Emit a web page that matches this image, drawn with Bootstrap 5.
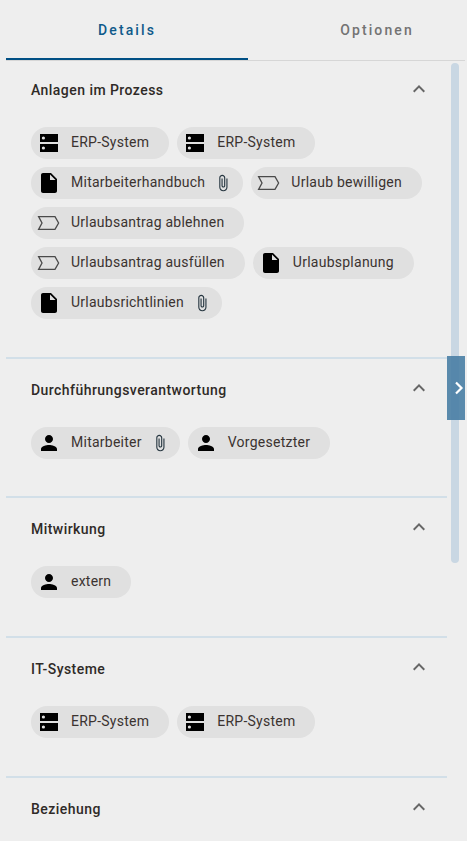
<!DOCTYPE html>
<html lang="de">
<head>
<meta charset="utf-8">
<title>Details</title>
<link href="https://cdn.jsdelivr.net/npm/bootstrap@5.3.0/dist/css/bootstrap.min.css" rel="stylesheet">
<style>
html,body{height:100%;overflow:hidden}
body{background:#eee;font-family:Roboto,"Liberation Sans",sans-serif;color:#2a2320}
.shell{position:relative;width:465px;height:841px;background:#eee;overflow:hidden}
.tabbar{height:61px;margin-left:6px;border-bottom:1px solid #d6d6d6;overflow:hidden}
.tabitem{flex:none;width:242px;height:60px;line-height:60px;text-align:center;font-size:14px;font-weight:500;letter-spacing:2.1px;color:#737373;text-decoration:none}
.tabitem.other{width:258px}
.tabitem.on{color:#0f5a8a;border-bottom:2px solid #004f84}
.panes{width:441px;margin-left:6px}
.sect{border-bottom:2px solid #d2dfe8;padding:0 16px 0 25px}
.sect:last-child{border-bottom:0}
.shead{height:60px;font-size:14px;font-weight:500;letter-spacing:.45px;color:#2f2a27}
.shead span{padding-top:2px}
.shead svg{width:24px;height:24px;flex:none;margin-bottom:2px}
.s1 .shead{height:58px}
.s1 .shead span{padding-top:0}
.sbody{padding:8px 0 38px;gap:8px}
.s2 .sbody{padding-bottom:37px}
.chip{height:32px;border-radius:16px;background:#e0e0e0;font-size:14px;letter-spacing:.25px;color:#3b3330;padding:0 20px 1px 6px;white-space:nowrap}
.chip .lead-ic{width:24px;height:24px;flex:none;margin:1px 10px 0 0}
.clip{width:18px;height:18px;flex:none;margin:1px -9px 0 9px}
.slider{position:absolute;left:451px;top:63px;width:8px;height:500px;border-radius:4px;background:#c9d7e3}
.handle{position:absolute;left:447px;top:356px;width:24px;height:64px;background:rgba(70,124,163,.88)}
</style>
</head>
<body>
<svg width="0" height="0" class="d-block position-absolute">
<defs>
<symbol id="i-srv" viewBox="0 0 24 24"><path fill="#000" d="M3 3h18v8H3zM3 13h18v8H3z"/><circle cx="6.4" cy="7" r="1.6" fill="#e0e0e0"/><circle cx="6.4" cy="17" r="1.6" fill="#e0e0e0"/></symbol>
<symbol id="i-doc" viewBox="0 0 24 24"><path fill="#000" d="M14 2H6c-1.1 0-2 .9-2 2v16c0 1.1.9 2 2 2h12c1.1 0 2-.9 2-2V8l-6-6zm-1 7V3.5L18.5 9H13z"/></symbol>
<symbol id="i-usr" viewBox="0 0 24 24"><path fill="#000" d="M12 12c2.21 0 4-1.79 4-4s-1.79-4-4-4-4 1.79-4 4 1.79 4 4 4zm0 2c-2.67 0-8 1.34-8 4v2h16v-2c0-2.66-5.33-4-8-4z"/></symbol>
<symbol id="i-tag" viewBox="0 0 24 24"><path fill="none" stroke="#4a4a4a" stroke-width="1.3" d="M1.6 5.6H18l3.6 6.4-3.6 6.4H1.6L5 12z"/></symbol>
<symbol id="i-clip" viewBox="0 0 24 24"><path fill="#263640" d="M16.5 6v11.5c0 2.21-1.79 4-4 4s-4-1.79-4-4V5c0-1.38 1.12-2.5 2.5-2.5s2.5 1.12 2.5 2.5v10.5c0 .55-.45 1-1 1s-1-.45-1-1V6H10v9.5c0 1.38 1.12 2.5 2.5 2.5s2.5-1.12 2.5-2.5V5c0-2.21-1.79-4-4-4S7 2.79 7 5v12.5c0 3.04 2.46 5.5 5.5 5.5s5.5-2.46 5.5-5.5V6h-1.5z"/></symbol>
<symbol id="i-up" viewBox="0 0 24 24"><path fill="#666" d="M12 8l-6 6 1.41 1.41L12 10.83l4.59 4.58L18 14z"/></symbol>
</defs>
</svg>
<div class="shell">
<nav class="nav tabbar flex-nowrap">
<a class="tabitem on" href="#">Details</a>
<a class="tabitem other" href="#">Optionen</a>
</nav>
<div class="panes">
<section class="sect s1">
<div class="shead d-flex align-items-center justify-content-between"><span>Anlagen im Prozess</span><svg><use href="#i-up"/></svg></div>
<div class="sbody d-flex flex-wrap">
<span class="chip d-inline-flex align-items-center"><svg class="lead-ic"><use href="#i-srv"/></svg>ERP-System</span>
<span class="chip d-inline-flex align-items-center"><svg class="lead-ic"><use href="#i-srv"/></svg>ERP-System</span>
<span class="chip d-inline-flex align-items-center"><svg class="lead-ic"><use href="#i-doc"/></svg>Mitarbeiterhandbuch<svg class="clip"><use href="#i-clip"/></svg></span>
<span class="chip d-inline-flex align-items-center"><svg class="lead-ic"><use href="#i-tag"/></svg>Urlaub bewilligen</span>
<span class="chip d-inline-flex align-items-center"><svg class="lead-ic"><use href="#i-tag"/></svg>Urlaubsantrag ablehnen</span>
<span class="chip d-inline-flex align-items-center"><svg class="lead-ic"><use href="#i-tag"/></svg>Urlaubsantrag ausfüllen</span>
<span class="chip d-inline-flex align-items-center"><svg class="lead-ic"><use href="#i-doc"/></svg>Urlaubsplanung</span>
<span class="chip d-inline-flex align-items-center"><svg class="lead-ic"><use href="#i-doc"/></svg>Urlaubsrichtlinien<svg class="clip"><use href="#i-clip"/></svg></span>
</div>
</section>
<section class="sect s2">
<div class="shead d-flex align-items-center justify-content-between"><span>Durchführungsverantwortung</span><svg><use href="#i-up"/></svg></div>
<div class="sbody d-flex flex-wrap">
<span class="chip d-inline-flex align-items-center"><svg class="lead-ic"><use href="#i-usr"/></svg>Mitarbeiter<svg class="clip"><use href="#i-clip"/></svg></span>
<span class="chip d-inline-flex align-items-center"><svg class="lead-ic"><use href="#i-usr"/></svg>Vorgesetzter</span>
</div>
</section>
<section class="sect">
<div class="shead d-flex align-items-center justify-content-between"><span>Mitwirkung</span><svg><use href="#i-up"/></svg></div>
<div class="sbody d-flex flex-wrap">
<span class="chip d-inline-flex align-items-center"><svg class="lead-ic"><use href="#i-usr"/></svg>extern</span>
</div>
</section>
<section class="sect">
<div class="shead d-flex align-items-center justify-content-between"><span>IT-Systeme</span><svg><use href="#i-up"/></svg></div>
<div class="sbody d-flex flex-wrap">
<span class="chip d-inline-flex align-items-center"><svg class="lead-ic"><use href="#i-srv"/></svg>ERP-System</span>
<span class="chip d-inline-flex align-items-center"><svg class="lead-ic"><use href="#i-srv"/></svg>ERP-System</span>
</div>
</section>
<section class="sect">
<div class="shead d-flex align-items-center justify-content-between"><span>Beziehung</span><svg><use href="#i-up"/></svg></div>
</section>
</div>
<div class="slider"></div>
<div class="handle d-flex align-items-center justify-content-center"><svg width="10" height="14" viewBox="0 0 10 14"><path d="M2 1.5 7.5 7 2 12.5" fill="none" stroke="#fff" stroke-width="2.2"/></svg></div>
</div>
<script src="https://cdn.jsdelivr.net/npm/bootstrap@5.3.0/dist/js/bootstrap.bundle.min.js"></script>
</body>
</html>
